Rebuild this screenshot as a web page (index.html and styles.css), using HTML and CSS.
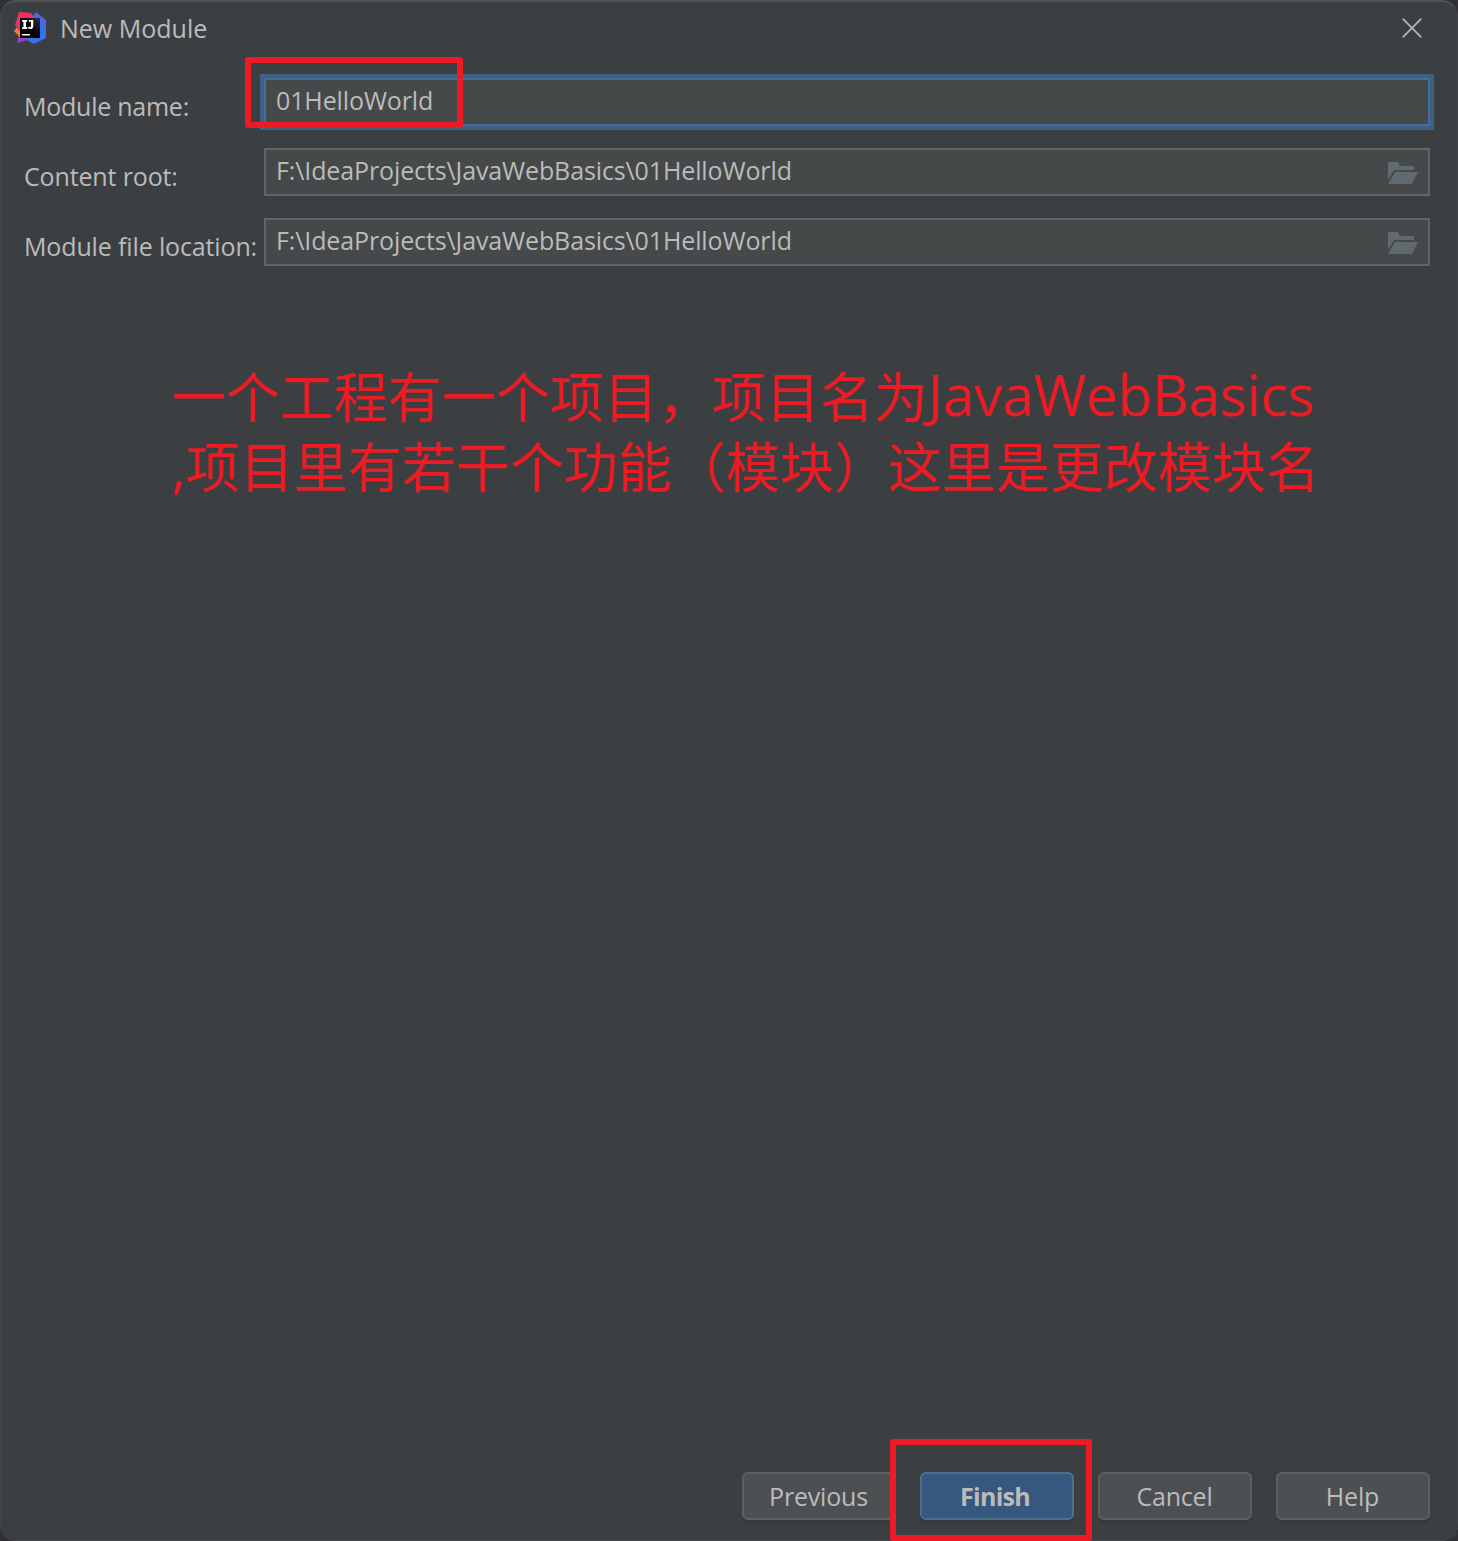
FILE: index.html
```html
<!DOCTYPE html>
<html lang="zh-CN">
<head>
<meta charset="utf-8">
<title>New Module</title>
<link rel="stylesheet" href="styles.css">
</head>
<body>
<div class="dialog">
  <header class="titlebar">
    <svg class="logo" width="32" height="32" viewBox="0 0 32 32">
      <defs>
        <linearGradient id="blue" x1="0" y1="1" x2="1" y2="0"><stop offset="0" stop-color="#3b6fe8"/><stop offset=".5" stop-color="#2f76f0"/><stop offset="1" stop-color="#6b57e0"/></linearGradient>
        <linearGradient id="pink" x1="1" y1="0" x2="0" y2="1"><stop offset="0" stop-color="#fe2857"/><stop offset=".6" stop-color="#f62f63"/><stop offset="1" stop-color="#a043c8"/></linearGradient>
        <linearGradient id="ink" x1="0" y1="1" x2="1" y2="0"><stop offset=".5" stop-color="#000"/><stop offset="1" stop-color="#343434"/></linearGradient>
      </defs>
      <path fill="#a33bc4" d="M5 22 3 31 17 27V20Z"/>
      <path fill="#fc801d" d="M5 13 0 19 6 25 9 16Z"/>
      <path fill="url(#pink)" d="M5 0 17 1 22 8 8 23 1 13Z"/>
      <path fill="url(#blue)" d="M22 0 32 8V26L20 32 11 27 17 7Z"/>
      <path fill="url(#ink)" d="M6 6H26V26H6Z"/>
      <path fill="#fff" d="M8 8H13.3V9.7H12V15.3H13.3V17H8V15.3H9.4V9.7H8ZM15 8H19.3V14Q19.3 17.1 16.5 17.1 14.8 17.1 13.8 16L15 14.6Q15.6 15.3 16.2 15.3 17 15.3 17 14V9.7H15ZM8 22H16V23.4H8Z"/>
    </svg>
    <h1 class="title">New Module</h1>
    <svg class="close" width="20" height="20" viewBox="0 0 20 20"><path fill="none" stroke="#b4b6b7" stroke-width="1.7" d="M.7.7 19.3 19.3M19.3.7.7 19.3"/></svg>
  </header>
  <main class="form">
    <label class="label label-name">Module name:</label>
    <div class="field focused"><span class="value">01HelloWorld</span><div class="mark mark-name"></div></div>
    <label class="label">Content root:</label>
    <div class="field"><span class="value">F:\IdeaProjects\JavaWebBasics\01HelloWorld</span>
      <svg class="folder" width="30" height="22" viewBox="0 0 30 22"><path fill="#616a6f" d="M0 0H10L12 4H26V8H6L0 18ZM7 10H30L24 22H0Z"/></svg></div>
    <label class="label">Module file location:</label>
    <div class="field"><span class="value">F:\IdeaProjects\JavaWebBasics\01HelloWorld</span>
      <svg class="folder" width="30" height="22" viewBox="0 0 30 22"><path fill="#616a6f" d="M0 0H10L12 4H26V8H6L0 18ZM7 10H30L24 22H0Z"/></svg></div>
  </main>
  <p class="note">一个工程有一个项目，项目名为<span class="latin">JavaWebBasics</span><br><span class="comma">,</span>项目里有若干个功能（模块）这里是更改模块名</p>
  <footer class="actions">
    <button class="btn">Previous</button>
    <button class="btn primary">Finish<span class="mark mark-finish"></span></button>
    <button class="btn">Cancel</button>
    <button class="btn">Help</button>
  </footer>
</div>
</body>
</html>
```
FILE: styles.css
```css
* { box-sizing: border-box; }
body {
  margin: 0;
  background: #2f3136;
  color: #bbb;
  font: 25px/36px "Open Sans", "Noto Sans", sans-serif;
}
.dialog {
  display: flex;
  flex-direction: column;
  height: 1541px;
  border: 1px solid #434648;
  border-top: 2px solid #505254;
  border-radius: 16px;
  background: #3c3f41;
}
.titlebar {
  display: flex;
  align-items: center;
  height: 52px;
  padding: 0 35px 0 13px;
}
.title {
  flex: 1;
  margin: 0 0 0 14px;
  font-size: inherit;
  font-weight: 400;
}
.form {
  display: grid;
  grid-template-columns: 240px 1fr;
  row-gap: 22px;
  margin: 24px 27px 0 23px;
}
.label { padding-top: 10px; white-space: nowrap; letter-spacing: -.14px; }
.label-name { letter-spacing: -.25px; }
.field {
  position: relative;
  display: flex;
  align-items: center;
  justify-content: space-between;
  height: 48px;
  padding: 0 10px;
  border: 2px solid #646464;
  background: #45494a;
}
.value { padding-bottom: 4px; letter-spacing: -.12px; }
.focused { border-color: #466d94; box-shadow: 0 0 0 4px #3d6185; }
.folder { margin-top: 2px; }
.mark {
  position: absolute;
  border: 6px solid #ed1c24;
  border-radius: 3px;
}
.mark-name { left: -21px; top: -23px; width: 218px; height: 71px; }
.note {
  margin: 94px 0 0 171px;
  color: #ed1c24;
  font: 54px/70px "Noto Sans CJK SC", sans-serif;
  white-space: nowrap;
}
.note span { font-family: "Open Sans", "Noto Sans", sans-serif; line-height: 0; }
.note .latin { font-size: 57px; letter-spacing: -.35px; vertical-align: 2px; }
.actions {
  display: flex;
  justify-content: flex-end;
  gap: 24px;
  margin: auto 27px 20px;
}
.btn {
  position: relative;
  width: 154px;
  height: 48px;
  padding: 0 1px 0 0;
  border: 2px solid #5e6060;
  border-radius: 6px;
  background: #4c5052;
  box-shadow: 0 3px 1px #36393b;
  color: inherit;
  font: inherit;
  letter-spacing: -.2px;
}
.primary {
  z-index: 1;
  padding-right: 4px;
  border-color: #4c708c;
  background: #365880;
  font-weight: 700;
  letter-spacing: -.7px;
}
.mark-finish { left: -32px; top: -35px; width: 202px; height: 102px; }
```
